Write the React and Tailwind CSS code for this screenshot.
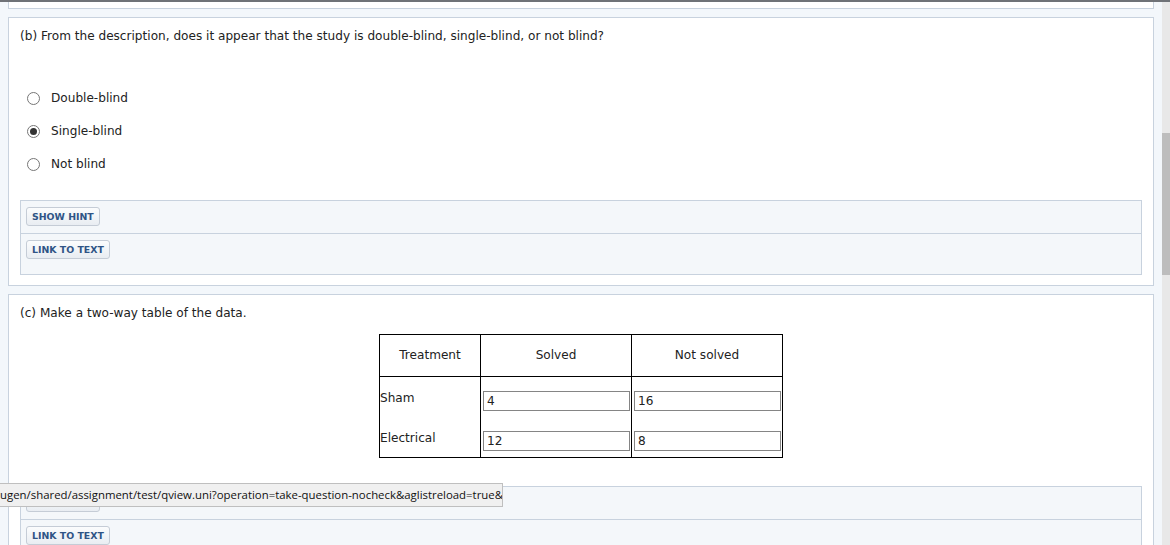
import React from "react";

const font = { fontFamily: '"DejaVu Sans", Verdana, sans-serif' };

function HintButton({ children }) {
  return (
    <button
      type="button"
      className="block h-[19px] rounded-[3px] border border-[#c5ccd6] bg-gradient-to-b from-[#fbfcfd] to-[#e9edf2] px-[5px] text-[9.4px] font-bold leading-[17px] text-[#2f5486]"
    >
      {children}
    </button>
  );
}

function HintBox() {
  return (
    <div className="border border-[#c8d2de] bg-[#f4f7fa]">
      <div className="h-[32px] pl-[5px] pt-[6px]">
        <HintButton>SHOW HINT</HintButton>
      </div>
      <div className="h-[41px] border-t border-[#c8d2de] pl-[5px] pt-[6px]">
        <HintButton>LINK TO TEXT</HintButton>
      </div>
    </div>
  );
}

function Radio({ label, checked }) {
  return (
    <label className="flex h-[33px] items-center pl-[7px]">
      <span className="flex h-[13px] w-[13px] items-center justify-center rounded-full border border-[#767676] bg-white">
        {checked && <span className="h-[7px] w-[7px] rounded-full bg-[#333]" />}
      </span>
      <span className="ml-[11px] text-[12.1px] text-[#222]">{label}</span>
    </label>
  );
}

function Cell({ value }) {
  return (
    <input
      readOnly
      value={value}
      className="ml-[2px] block h-[20px] w-[147px] border border-[#858585] bg-white px-[3px] text-[12.1px] text-[#222] outline-none"
      style={font}
    />
  );
}

export default function App() {
  return (
    <div className="relative flex h-[545px] flex-col overflow-hidden bg-[#f3f7fb]" style={font}>
      <div className="h-[2px] shrink-0 bg-[#6f7277]" />
      <div className="flex flex-1 shrink-0">
        <div className="flex-1 px-[8px]">
          {/* tail of previous part */}
          <div className="h-[7px] border-x border-b border-[#c8d2de] bg-white" />

          {/* part b */}
          <div className="mt-[8px] border border-[#c8d2de] bg-white px-[11px] pt-[9px] pb-[10px]">
            <p className="text-[12.1px] leading-[18px] text-[#222]">
              (b) From the description, does it appear that the study is double-blind, single-blind, or not blind?
            </p>
            <div className="mt-[37px]">
              <Radio label="Double-blind" />
              <Radio label="Single-blind" checked />
              <Radio label="Not blind" />
            </div>
            <div className="mt-[19px]">
              <HintBox />
            </div>
          </div>

          {/* part c */}
          <div className="mt-[8px] border border-[#c8d2de] bg-white px-[11px] pt-[9px] pb-[10px]">
            <p className="text-[12.1px] leading-[18px] text-[#222]">(c) Make a two-way table of the data.</p>
            <div className="mt-[12px] flex justify-center">
              <table className="w-[404px] border-collapse border border-black text-[12.1px] text-[#222]">
                <thead>
                  <tr className="h-[42px]">
                    <th className="w-[101px] border border-black font-normal">Treatment</th>
                    <th className="w-[151px] border border-black font-normal">Solved</th>
                    <th className="w-[151px] border border-black font-normal">Not solved</th>
                  </tr>
                </thead>
                <tbody>
                  <tr>
                    <td className="border-x border-black pt-[13px] pb-[6px] align-top leading-[16px]">Sham</td>
                    <td className="border-x border-black pt-[14px] pb-[6px] align-top"><Cell value="4" /></td>
                    <td className="border-x border-black pt-[14px] pb-[6px] align-top"><Cell value="16" /></td>
                  </tr>
                  <tr>
                    <td className="border-x border-black pt-[13px] pb-[6px] align-top leading-[16px]">Electrical</td>
                    <td className="border-x border-black pt-[14px] pb-[6px] align-top"><Cell value="12" /></td>
                    <td className="border-x border-black pt-[14px] pb-[6px] align-top"><Cell value="8" /></td>
                  </tr>
                </tbody>
              </table>
            </div>
            <div className="mt-[28px]">
              <HintBox />
            </div>
          </div>
        </div>

        {/* scrollbar */}
        <div className="flex w-[8px] flex-col bg-[#e8e8e8]">
          <div className="h-[131px]" />
          <div className="h-[142px] bg-[#bdbdbd]" />
        </div>
      </div>

      {/* browser status link overlay */}
      <div className="absolute left-0 top-[483px] h-[24px] w-[503px] overflow-hidden border-y border-r border-[#bfbfbf] bg-[#f0f0f0]">
        <div
          className="whitespace-nowrap text-[11.4px] leading-[22px] text-[#111]"
          style={{ fontFamily: '"Open Sans", "Noto Sans", sans-serif' }}
        >
          ugen/shared/assignment/test/qview.uni?operation=take-question-nocheck&amp;aglistreload=true&amp;
        </div>
      </div>
    </div>
  );
}
